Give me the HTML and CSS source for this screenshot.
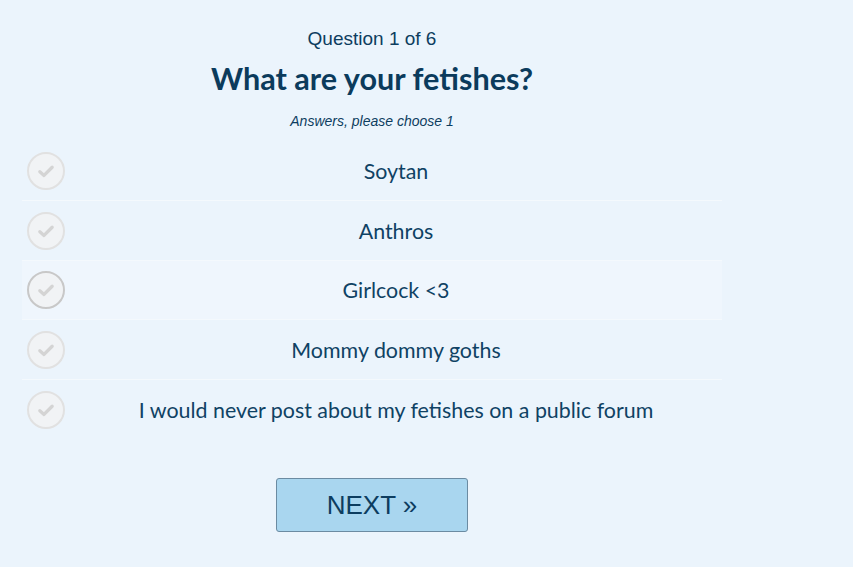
FILE: index.html
```html
<!DOCTYPE html>
<html>
<head>
<meta charset="utf-8">
<link rel="stylesheet" href="styles.css">
</head>
<body>
<div class="quiz">
  <div class="counter">Question 1 of 6</div>
  <h1 class="title">What are your fetishes?</h1>
  <div class="hint">Answers, please choose 1</div>
  <ul class="options">
    <li class="option"><span class="check"><svg viewBox="0 0 20 20" width="22" height="22"><path d="M4.4 10.6 L8.2 14 L15.6 6.6" fill="none" stroke="#d4d4d4" stroke-width="3" stroke-linecap="round" stroke-linejoin="round"/></svg></span><span class="label">Soytan</span></li>
    <li class="option"><span class="check"><svg viewBox="0 0 20 20" width="22" height="22"><path d="M4.4 10.6 L8.2 14 L15.6 6.6" fill="none" stroke="#d4d4d4" stroke-width="3" stroke-linecap="round" stroke-linejoin="round"/></svg></span><span class="label">Anthros</span></li>
    <li class="option hover"><span class="check"><svg viewBox="0 0 20 20" width="22" height="22"><path d="M4.4 10.6 L8.2 14 L15.6 6.6" fill="none" stroke="#d4d4d4" stroke-width="3" stroke-linecap="round" stroke-linejoin="round"/></svg></span><span class="label">Girlcock &lt;3</span></li>
    <li class="option"><span class="check"><svg viewBox="0 0 20 20" width="22" height="22"><path d="M4.4 10.6 L8.2 14 L15.6 6.6" fill="none" stroke="#d4d4d4" stroke-width="3" stroke-linecap="round" stroke-linejoin="round"/></svg></span><span class="label">Mommy dommy goths</span></li>
    <li class="option last"><span class="check"><svg viewBox="0 0 20 20" width="22" height="22"><path d="M4.4 10.6 L8.2 14 L15.6 6.6" fill="none" stroke="#d4d4d4" stroke-width="3" stroke-linecap="round" stroke-linejoin="round"/></svg></span><span class="label">I would never post about my fetishes on a public forum</span></li>
  </ul>
  <div class="actions"><button class="next">NEXT »</button></div>
</div>
</body>
</html>
```
FILE: styles.css
```css
html, body { margin: 0; padding: 0; }
body {
  background: #ebf4fc;
  color: #0d3d5f;
  font-family: "Liberation Sans", Arial, sans-serif;
  width: 853px;
  height: 567px;
  overflow: hidden;
}
.quiz {
  width: 700px;
  margin-left: 22px;
  padding-top: 27px;
}
.counter {
  text-align: center;
  font-size: 19px;
  line-height: 24px;
  color: #0d3d5f;
}
.title {
  margin: 8px 0 0;
  text-align: center;
  font-family: Lato, "Open Sans", sans-serif;
  font-weight: 700;
  font-size: 30.6px;
  line-height: 40px;
  color: #0b3b5c;
}
.hint {
  margin-top: 14px;
  text-align: center;
  font-style: italic;
  font-size: 14px;
  line-height: 16px;
}
.options {
  list-style: none;
  margin: 12px 0 0;
  padding: 0;
}
.option {
  display: flex;
  align-items: center;
  height: 59px;
  border-bottom: 1px solid #f4f9fd;
}
.option.hover {
  background: #eff6fd;
  height: 58px;
  border-top: 1px solid #f4f9fd;
  margin-top: -1px;
  border-bottom: 1px solid #f4f9fd;
}
.option.last { border-bottom-color: transparent; }
.check {
  box-sizing: border-box;
  width: 38px;
  height: 38px;
  margin-left: 5px;
  border-radius: 50%;
  border: 2px solid #e1e1e1;
  background: #f1f3f5;
  display: flex;
  align-items: center;
  justify-content: center;
  flex: none;
}
.hover .check { border-color: #c8c8c8; }
.label {
  flex: 1;
  text-align: center;
  font-family: Lato, "Open Sans", sans-serif;
  font-size: 21.4px;
  color: #0f4264;
  margin-left: 5px;
}
.actions {
  display: flex;
  justify-content: center;
  margin-top: 38px;
}
.next {
  width: 192px;
  height: 54px;
  background: #a9d6ef;
  border: 1px solid #6b8ba2;
  border-radius: 3px;
  color: #0d3d5f;
  font-family: "Liberation Sans", Arial, sans-serif;
  font-size: 26px;
  padding: 0;
}
```
